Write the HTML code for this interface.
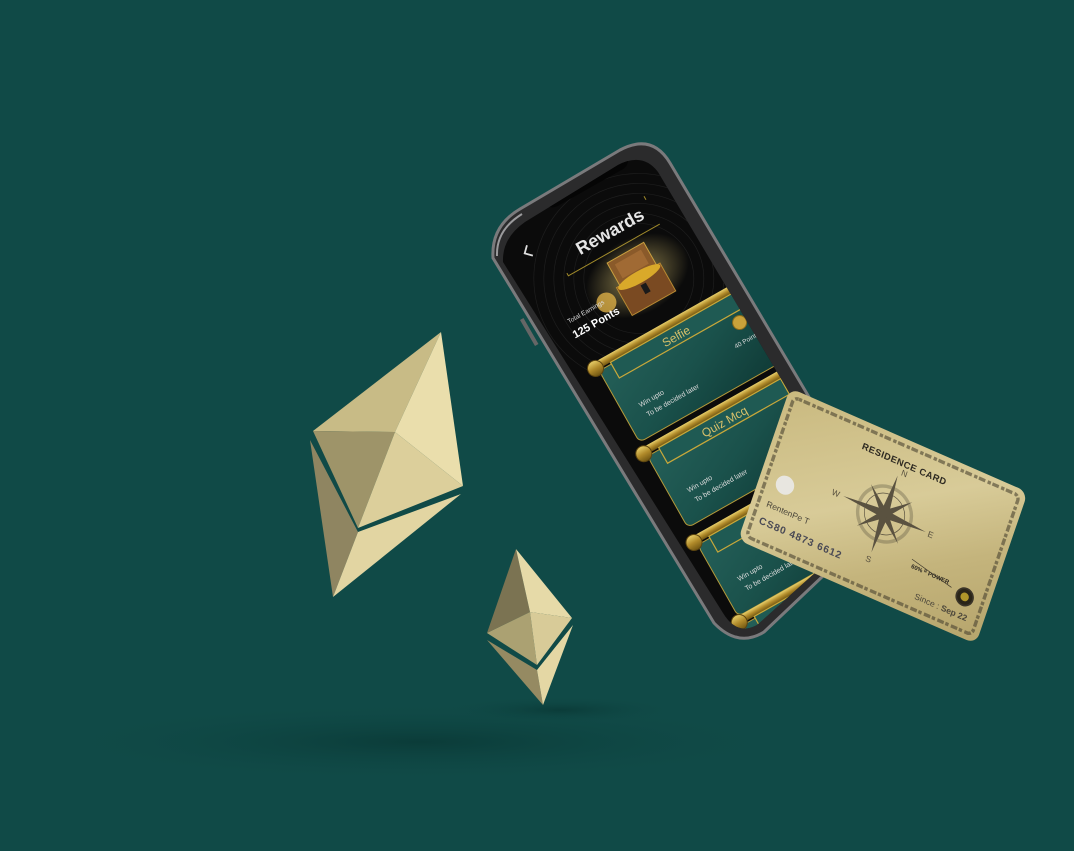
<!DOCTYPE html>
<html><head><meta charset="utf-8"><style>
html,body{margin:0;padding:0;background:#104a47;}
svg{display:block}
text{font-family:"Liberation Sans",sans-serif}
</style></head><body>
<svg width="1074" height="851" viewBox="0 0 1074 851" xmlns="http://www.w3.org/2000/svg">
<defs>
<radialGradient id="sh" cx="0.5" cy="0.5" r="0.5"><stop offset="0" stop-color="#0a3a37" stop-opacity="0.9"/><stop offset="1" stop-color="#104a47" stop-opacity="0"/></radialGradient>
<linearGradient id="gold" x1="0" y1="0" x2="1" y2="1"><stop offset="0" stop-color="#c9b97f"/><stop offset="0.45" stop-color="#d8cb98"/><stop offset="0.7" stop-color="#c4b47c"/><stop offset="1" stop-color="#b6a56c"/></linearGradient>
<linearGradient id="teal" x1="0" y1="0" x2="1" y2="1"><stop offset="0" stop-color="#245f58"/><stop offset="0.5" stop-color="#1a514b"/><stop offset="1" stop-color="#0f3a36"/></linearGradient>
<linearGradient id="bar" x1="0" y1="0" x2="0" y2="1"><stop offset="0" stop-color="#e8cf6a"/><stop offset="0.5" stop-color="#b08a2a"/><stop offset="1" stop-color="#6f5512"/></linearGradient>
<radialGradient id="glow" cx="0.5" cy="0.5" r="0.5"><stop offset="0" stop-color="#e9d27a" stop-opacity="0.6"/><stop offset="1" stop-color="#e9d27a" stop-opacity="0"/></radialGradient>
<clipPath id="scr"><path d="M503,262 Q502,238 525,222 L618,165 Q643,152 658,172 L868,525 L757,625 Q737,636 723,613 Z"/></clipPath>
</defs>

<ellipse cx="420" cy="742" rx="380" ry="40" fill="url(#sh)"/>
<ellipse cx="560" cy="710" rx="120" ry="14" fill="url(#sh)"/>

<!-- big eth -->
<polygon points="310,440 358,532 333,597" fill="#8f8561"/>
<polygon points="358,532 461,494 333,597" fill="#e2d5a2"/>
<polygon points="441,332 313,431 395,432" fill="#c8bb86"/>
<polygon points="313,431 395,432 358,528" fill="#9e9469"/>
<polygon points="441,332 395,432 463,486" fill="#eadeac"/>
<polygon points="395,432 463,486 358,528" fill="#dccf9b"/>

<!-- small eth -->
<polygon points="487,640 537,670 543,705" fill="#958a62"/>
<polygon points="537,670 573,625 543,705" fill="#e4d7a4"/>
<polygon points="516,549 487,633 530,612" fill="#7b7352"/>
<polygon points="487,633 530,612 537,665" fill="#aba172"/>
<polygon points="516,549 530,612 572,618" fill="#e6daa8"/>
<polygon points="530,612 572,618 537,665" fill="#d8cb98"/>

<!-- phone frame -->
<path d="M493,258 Q491,226 520,209 L620,150 Q652,133 670,163 L882,520 L764,632 Q738,648 714,623 Z" fill="#2b2b2c" stroke="#7a7a7c" stroke-width="3"/>
<path d="M497,256 Q496,230 522,214" stroke="#9a9a9c" stroke-width="2" fill="none"/>
<rect x="0" y="0" width="4" height="30" fill="#666" transform="translate(520,320) rotate(-30)"/>
<path d="M503,262 Q502,238 525,222 L618,165 Q643,152 658,172 L868,525 L757,625 Q737,636 723,613 Z" fill="#0b0b0b"/>

<g clip-path="url(#scr)">
<g transform="translate(505,245) rotate(-29.5)">
  <g stroke="#1e1e1e" stroke-width="0.7" fill="none">
    <circle cx="100" cy="95" r="55"/><circle cx="100" cy="95" r="65"/><circle cx="100" cy="95" r="75"/><circle cx="100" cy="95" r="85"/><circle cx="100" cy="95" r="95"/><circle cx="100" cy="95" r="105"/>
  </g>
  <rect x="55" y="-30" width="95" height="22" rx="10" fill="#050505"/>
  <circle cx="90" cy="-18" r="4" fill="#1a1a2a"/><circle cx="110" cy="-18" r="3.5" fill="#151515"/>
  <path d="M19,11 L13,17 L19,23" stroke="#ddd" stroke-width="1.8" fill="none"/>
  <text x="98" y="46" font-size="18" font-weight="bold" fill="#e6e6e6" text-anchor="middle">Rewards</text>
  <path d="M40,55 L40,58 L145,58 M145,26 L145,30" stroke="#a08a2a" stroke-width="1" fill="none"/>
  <!-- chest -->
  <ellipse cx="100" cy="92" rx="55" ry="38" fill="url(#glow)"/>
  <rect x="80" y="66" width="42" height="26" fill="#8a5a2a" stroke="#c8a040" stroke-width="1"/>
  <rect x="86" y="71" width="30" height="16" fill="#a06a34"/>
  <rect x="76" y="92" width="50" height="32" fill="#7a4a22" stroke="#b88a32" stroke-width="1"/>
  <ellipse cx="101" cy="94" rx="24" ry="6" fill="#d9a92a"/>
  <rect x="98" y="102" width="6" height="10" fill="#1a1a1a"/>
  <circle cx="60" cy="100" r="10" fill="#e8b84a" opacity="0.75"/>
  <text x="17" y="100" font-size="6.5" fill="#ddd">Total Earnings</text>
  <text x="15" y="116" font-size="11" font-weight="bold" fill="#fff">125 Ponts</text>

  <g transform="translate(98,186)">
    <rect x="-78" y="-30" width="170" height="82" rx="6" fill="url(#teal)" stroke="#b59a3a" stroke-width="1"/>
    <rect x="-82" y="-40" width="178" height="8" rx="3" fill="url(#bar)"/>
    <circle cx="-80" cy="-34" r="8" fill="url(#bar)" stroke="#5c4510"/><circle cx="94" cy="-38" r="8" fill="url(#bar)" stroke="#5c4510"/>
    <rect x="-64" y="-32" width="140" height="18" fill="#1f5a53" stroke="#c8a83a" stroke-width="1.2"/>
    <text x="6" y="-18" font-size="12" fill="#d7c06a" text-anchor="middle" font-family="Liberation Serif">Selfie</text>
    <circle cx="68" cy="-3" r="7" fill="#c9a23a" stroke="#8a6a1a"/>
    <text x="52" y="18" font-size="6.5" fill="#ddd">40 Points</text>
    <text x="-60" y="22" font-size="7" fill="#ddd">Win upto</text>
    <text x="-58" y="34" font-size="7" fill="#ddd">To be decided later</text>
  </g>
  <g transform="translate(98,284)">
    <rect x="-78" y="-30" width="170" height="82" rx="6" fill="url(#teal)" stroke="#b59a3a" stroke-width="1"/>
    <rect x="-82" y="-40" width="178" height="8" rx="3" fill="url(#bar)"/>
    <circle cx="-80" cy="-34" r="8" fill="url(#bar)" stroke="#5c4510"/><circle cx="94" cy="-38" r="8" fill="url(#bar)" stroke="#5c4510"/>
    <rect x="-64" y="-32" width="140" height="18" fill="#1f5a53" stroke="#c8a83a" stroke-width="1.2"/>
    <text x="6" y="-18" font-size="12" fill="#d7c06a" text-anchor="middle" font-family="Liberation Serif">Quiz Mcq</text>
    <text x="-60" y="22" font-size="7" fill="#ddd">Win upto</text>
    <text x="-58" y="34" font-size="7" fill="#ddd">To be decided later</text>
  </g>
  <g transform="translate(98,386)">
    <rect x="-78" y="-30" width="170" height="82" rx="6" fill="url(#teal)" stroke="#b59a3a" stroke-width="1"/>
    <rect x="-82" y="-40" width="178" height="8" rx="3" fill="url(#bar)"/>
    <circle cx="-80" cy="-34" r="8" fill="url(#bar)" stroke="#5c4510"/>
    <rect x="-64" y="-32" width="140" height="18" fill="#1f5a53" stroke="#c8a83a" stroke-width="1.2"/>
    <text x="-60" y="22" font-size="7" fill="#ddd">Win upto</text>
    <text x="-58" y="34" font-size="7" fill="#ddd">To be decided later</text>
  </g>
  <g transform="translate(98,478)">
    <rect x="-78" y="-30" width="170" height="82" rx="6" fill="url(#teal)" stroke="#b59a3a" stroke-width="1"/>
    <rect x="-82" y="-40" width="178" height="8" rx="3" fill="url(#bar)"/>
    <circle cx="-80" cy="-34" r="8" fill="url(#bar)" stroke="#5c4510"/>
    <rect x="-64" y="-32" width="140" height="18" fill="#1f5a53" stroke="#c8a83a" stroke-width="1.2"/>
  </g>
</g>
</g>

<!-- residence card -->
<g transform="matrix(0.793,0.347,-0.274,0.8,790,388)">
  <rect x="0" y="0" width="300" height="190" rx="12" fill="url(#gold)"/>
  <rect x="8" y="8" width="284" height="174" rx="6" fill="none" stroke="#4a4330" stroke-width="4" stroke-dasharray="4 2 8 3" opacity="0.6"/>
  <text x="154" y="32" font-size="11" font-weight="bold" fill="#2e2a22" text-anchor="middle" letter-spacing="0.5">RESIDENCE CARD</text>
  <g transform="translate(151,92)" fill="#5a5240" stroke="#5a5240">
    <circle r="32" fill="none" stroke-width="4" opacity="0.35"/>
    <circle r="24" fill="none" stroke-width="0.8"/>
    <polygon points="0,-48 5,0 0,48 -5,0" stroke="none"/>
    <polygon points="-52,0 0,-5 52,0 0,5" stroke="none"/>
    <polygon points="-26,-26 3,-3 26,26 -3,3" stroke="none"/>
    <polygon points="26,-26 3,3 -26,26 -3,-3" stroke="none"/>
    <text x="3" y="-50" font-size="10" stroke="none" font-family="Liberation Serif">N</text>
    <text x="55" y="4" font-size="10" stroke="none" font-family="Liberation Serif">E</text>
    <text x="-4" y="60" font-size="10" stroke="none" font-family="Liberation Serif">S</text>
    <text x="-66" y="4" font-size="10" stroke="none" font-family="Liberation Serif">W</text>
  </g>
  <circle cx="31" cy="108" r="11" fill="#e8e6e0"/>
  <text x="18" y="140" font-size="10" fill="#4a453a">RentenPe T</text>
  <text x="16" y="162" font-size="12" font-weight="bold" fill="#4a4a55" letter-spacing="1">CS80 4873 6612</text>
  <text x="200" y="138" font-size="7" font-weight="bold" fill="#2e2a22">60% ᴿ POWER</text>
  <path d="M198,128 L252,140" stroke="#3a3428" stroke-width="0.8"/>
  <circle cx="270" cy="144" r="10" fill="#2a2518" stroke="#3a3428" stroke-width="2"/>
  <circle cx="270" cy="144" r="5" fill="#b0962a"/>
  <text x="215" y="170" font-size="10" fill="#4a453a">Since : <tspan font-weight="bold">Sep 22</tspan></text>
</g>
</svg>
</body></html>
